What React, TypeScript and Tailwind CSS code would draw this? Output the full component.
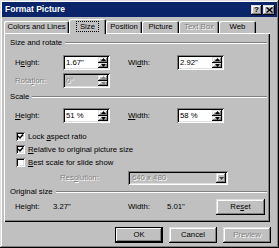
import React from "react";

const raised =
  "shadow-[inset_-1px_-1px_0_#000,inset_1px_1px_0_#dfdfdf,inset_-2px_-2px_0_#808080,inset_2px_2px_0_#fff]";
const sunken =
  "shadow-[inset_1px_1px_0_#808080,inset_-1px_-1px_0_#fff,inset_2px_2px_0_#000,inset_-2px_-2px_0_#dfdfdf]";
const dis = "text-[#808080] [text-shadow:1px_1px_0_#fff]";

function U({ c }: { c: string }) {
  return <span className="underline underline-offset-[1px]">{c}</span>;
}

function Header({ children }: { children: React.ReactNode }) {
  return (
    <div className="flex items-center h-[12px] pl-[6px] pr-[3px]">
      <span className="whitespace-nowrap">{children}</span>
      <div className="flex-1 ml-[3px] border-t border-t-[#808080] border-b border-b-white" />
    </div>
  );
}

function Arrow({ up, color = "#000" }: { up?: boolean; color?: string }) {
  return (
    <svg width="5" height="3" viewBox="0 0 5 3">
      <polygon points={up ? "2.5,0 5,3 0,3" : "0,0 5,0 2.5,3"} fill={color} />
    </svg>
  );
}

function Spin({ value, disabled }: { value: string; disabled?: boolean }) {
  return (
    <div
      className={`w-[47px] h-[15px] flex items-center p-[2px] ${sunken} ${
        disabled ? "bg-[#c0c0c0]" : "bg-white"
      }`}
    >
      <span className={`flex-1 pl-[1px] whitespace-nowrap ${disabled ? dis : ""}`}>{value}</span>
      <div className="w-[10px] h-[11px] flex flex-col">
        <div className={`flex-1 flex items-center justify-center bg-[#c0c0c0] ${raised}`}>
          <Arrow up color={disabled ? "#808080" : "#000"} />
        </div>
        <div className={`flex-1 flex items-center justify-center bg-[#c0c0c0] ${raised}`}>
          <Arrow color={disabled ? "#808080" : "#000"} />
        </div>
      </div>
    </div>
  );
}

function Check({ checked, label }: { checked: boolean; label: React.ReactNode }) {
  return (
    <div className="flex items-center h-[13px] pl-[12px]">
      <div className={`w-[9px] h-[9px] bg-white flex items-center justify-center ${sunken}`}>
        {checked && (
          <svg width="7" height="7" viewBox="0 0 7 7">
            <polyline points="1,3 3,5 6,1.5" fill="none" stroke="#000" strokeWidth="1.5" />
          </svg>
        )}
      </div>
      <span className="ml-[3px] whitespace-nowrap">{label}</span>
    </div>
  );
}

function Btn({
  children,
  def,
  disabled,
  w = "w-[48px]",
}: {
  children: React.ReactNode;
  def?: boolean;
  disabled?: boolean;
  w?: string;
}) {
  return (
    <div
      className={`${w} h-[16px] flex items-center justify-center bg-[#c0c0c0] ${
        def
          ? "shadow-[inset_0_0_0_1px_#000,inset_-2px_-2px_0_#000,inset_2px_2px_0_#fff,inset_-3px_-3px_0_#808080]"
          : raised
      } ${disabled ? dis : ""}`}
    >
      {children}
    </div>
  );
}

export default function App() {
  const tabs = [
    { label: "Colors and Lines", w: "w-[65px]" },
    { label: "Size", w: "w-[37px]", sel: true },
    { label: "Position", w: "w-[36px]" },
    { label: "Picture", w: "w-[37px]" },
    { label: "Text Box", w: "w-[40px]", dis: true },
    { label: "Web", w: "w-[37px]" },
  ];
  return (
    <div
      className={`w-[279px] h-[248px] bg-[#c0c0c0] p-[2px] flex flex-col text-[7.75px] leading-none text-black ${raised}`}
      style={{ fontFamily: '"Liberation Sans", Arial, sans-serif' }}
    >
      {/* Title bar */}
      <div className="h-[15px] bg-[#0a246a] flex items-center pl-[3px] pr-[2px]">
        <span className="text-white font-bold text-[8.5px] flex-1">Format Picture</span>
        <div className={`w-[11px] h-[10px] bg-[#c0c0c0] flex items-center justify-center font-bold text-[8px] ${raised}`}>
          ?
        </div>
        <div className={`ml-[1px] w-[12px] h-[10px] bg-[#c0c0c0] flex items-center justify-center ${raised}`}>
          <svg width="7" height="6" viewBox="0 0 7 6">
            <path d="M0.5 0.5 L6.5 5.5 M6.5 0.5 L0.5 5.5" stroke="#000" strokeWidth="1.4" />
          </svg>
        </div>
      </div>

      {/* Tabs */}
      <div className="mt-[2px] h-[15px] pl-[2px] flex items-end relative z-10">
        {tabs.map((t) => (
          <div
            key={t.label}
            className={`${t.w} flex items-center justify-center rounded-t-[2px] bg-[#c0c0c0] shadow-[inset_1px_1px_0_#fff,inset_-1px_0_0_#000,inset_-2px_0_0_#808080] ${
              t.sel ? "h-[15px]" : "h-[12px] mb-[1px]"
            } ${t.dis ? dis : ""}`}
          >
            {t.sel ? (
              <span className="border border-dotted border-black px-[3px] py-[1px]">{t.label}</span>
            ) : (
              <span className="whitespace-nowrap">{t.label}</span>
            )}
          </div>
        ))}
      </div>

      {/* Panel */}
      <div className="-mt-px ml-[2px] w-[266px] h-[189px] flex flex-col shadow-[inset_1px_1px_0_#fff,inset_-1px_-1px_0_#000,inset_-2px_-2px_0_#808080]">
        <div className="mt-[4px]">
          <Header>Size and rotate</Header>
        </div>
        <div className="mt-[6px] h-[15px] flex items-center pl-[11px]">
          <span className="w-[48px]">
            H<U c="e" />ight:
          </span>
          <Spin value={'1.67"'} />
          <span className="w-[18px]" />
          <span className="w-[49px]">
            Wi<U c="d" />th:
          </span>
          <Spin value={'2.92"'} />
        </div>
        <div className="mt-[3px] h-[15px] flex items-center pl-[11px]">
          <span className={`w-[48px] ${dis}`}>
            Rota<U c="t" />ion:
          </span>
          <Spin value={"0°"} disabled />
        </div>
        <div className="mt-[3px]">
          <Header>Scale</Header>
        </div>
        <div className="mt-[5px] h-[15px] flex items-center pl-[11px]">
          <span className="w-[48px]">
            <U c="H" />eight:
          </span>
          <Spin value="51 %" />
          <span className="w-[18px]" />
          <span className="w-[49px]">
            <U c="W" />idth:
          </span>
          <Spin value="58 %" />
        </div>
        <div className="mt-[7px]">
          <Check
            checked
            label={
              <>
                Lock <U c="a" />spect ratio
              </>
            }
          />
          <Check
            checked
            label={
              <>
                <U c="R" />elative to original picture size
              </>
            }
          />
          <Check
            checked={false}
            label={
              <>
                <U c="B" />est scale for slide show
              </>
            }
          />
        </div>
        <div className="mt-[2px] h-[14px] flex items-center pl-[56px]">
          <span className={`w-[68px] ${dis}`}>
            Res<U c="o" />lution:
          </span>
          <div className={`w-[100px] h-[14px] flex items-center p-[2px] bg-[#c0c0c0] ${sunken}`}>
            <span className={`flex-1 pl-[2px] ${dis}`}>640 x 480</span>
            <div className={`w-[10px] h-[10px] flex items-center justify-center bg-[#c0c0c0] ${raised}`}>
              <Arrow color="#404040" />
            </div>
          </div>
        </div>
        <div className="mt-[1px]">
          <Header>Original size</Header>
        </div>
        <div className="mt-[1px] h-[15px] flex items-center pl-[11px]">
          <span className="w-[38px]">Height:</span>
          <span className="w-[75px]">3.27"</span>
          <span className="w-[39px]">Width:</span>
          <span className="flex-1">5.01"</span>
          <Btn w="w-[49px]">
            Re<U c="s" />et
          </Btn>
          <span className="w-[5px]" />
        </div>
      </div>

      {/* Buttons */}
      <div className="mt-[5px] h-[16px] flex justify-end pr-[6px] gap-[6px]">
        <Btn def>OK</Btn>
        <Btn>Cancel</Btn>
        <Btn disabled>Preview</Btn>
      </div>
    </div>
  );
}
